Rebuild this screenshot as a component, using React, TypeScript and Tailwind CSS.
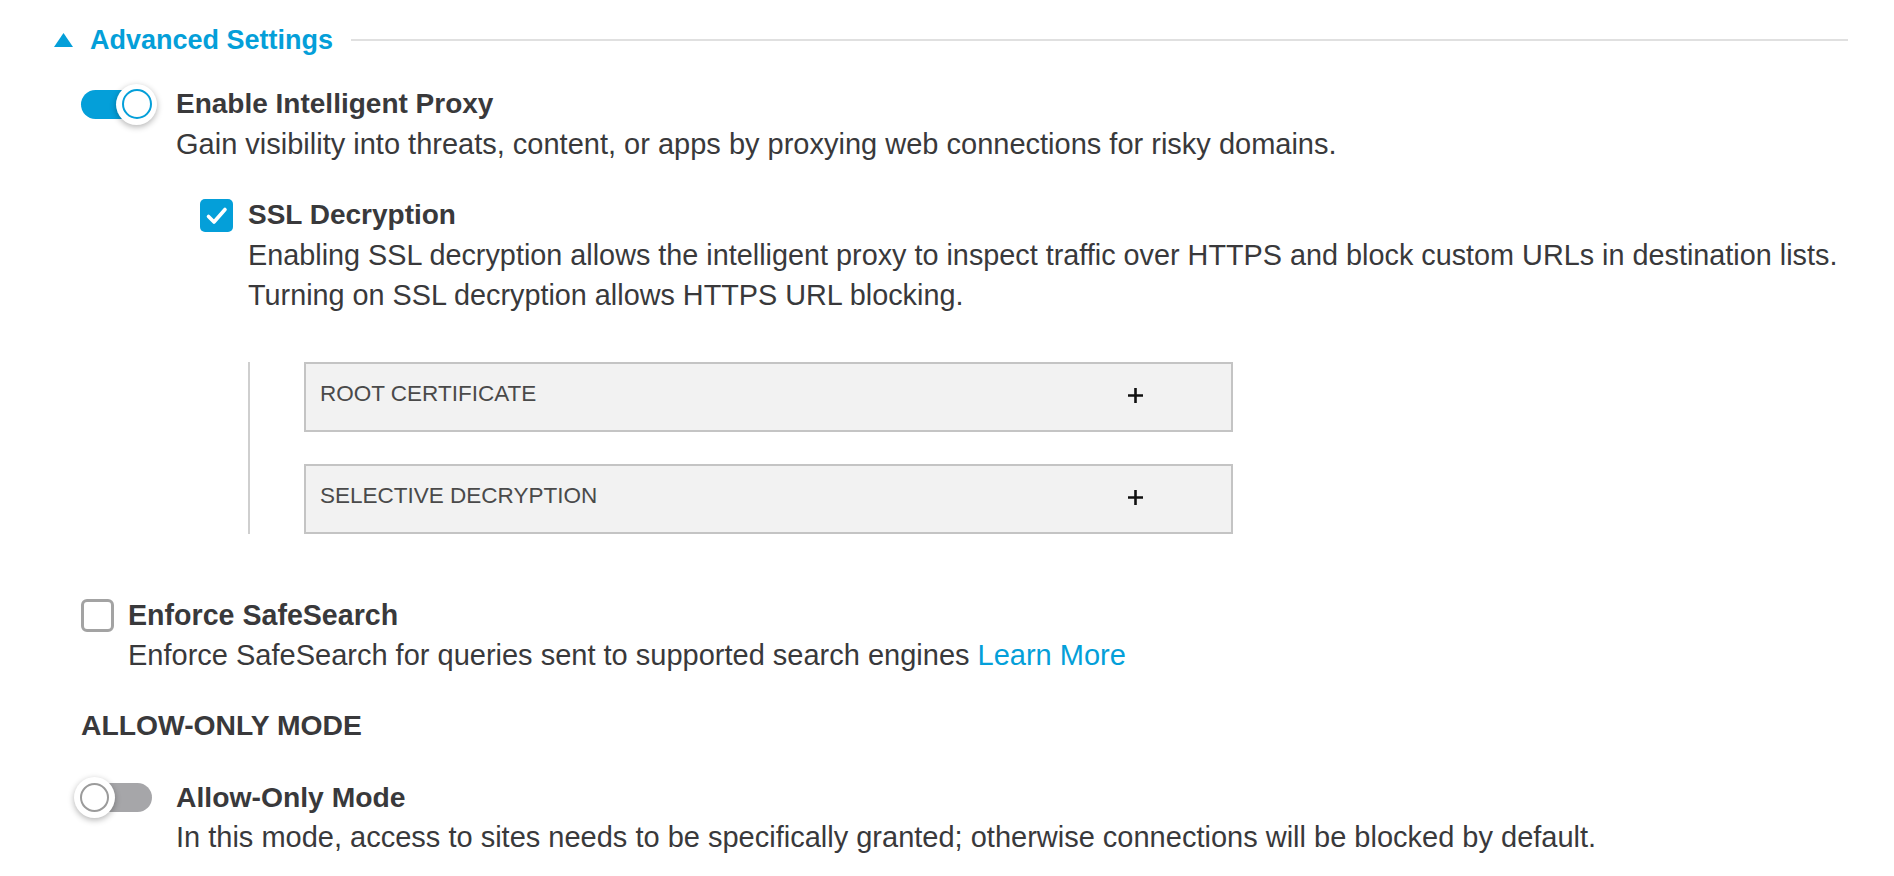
import React from "react";

type ToggleProps = { on: boolean };

function Toggle({ on }: ToggleProps) {
  return (
    <div className="relative h-[41px] w-[71px]">
      <div
        className={
          on
            ? "absolute left-0 top-[6px] h-[29px] w-[71px] rounded-full bg-[#049fd9]"
            : "absolute left-0 top-[6px] h-[29px] w-[71px] rounded-full bg-[#a6a6a9]"
        }
      />
      <div
        className={
          on
            ? "absolute left-[35px] top-0 flex h-[41px] w-[41px] items-center justify-center rounded-full bg-white shadow-[0_2px_6px_rgba(0,0,0,0.3)]"
            : "absolute left-[-7px] top-0 flex h-[41px] w-[41px] items-center justify-center rounded-full bg-white shadow-[0_2px_6px_rgba(0,0,0,0.3)]"
        }
      >
        <div
          className={
            on
              ? "h-[30px] w-[30px] rounded-full border-2 border-[#049fd9]"
              : "h-[29px] w-[29px] rounded-full border-2 border-[#9b9b9b]"
          }
        />
      </div>
    </div>
  );
}

function CheckedBox() {
  return (
    <svg width="33" height="33" viewBox="0 0 33 33">
      <rect x="0" y="0" width="33" height="33" rx="5" fill="#049fd9" />
      <path d="M8.5 17.5 L14 23 L25 10.5" fill="none" stroke="#fff" strokeWidth="3.6" strokeLinecap="round" strokeLinejoin="round" />
    </svg>
  );
}

function EmptyBox() {
  return <div className="h-[33px] w-[33px] rounded-[6px] border-[3px] border-[#a3a3a3] bg-white" />;
}

function Panel({ label }: { label: string }) {
  return (
    <div className="flex h-[70px] w-[929px] items-start justify-between border-2 border-[#c4c4c4] bg-[#f2f2f2] pl-[14px] pr-[88px] pt-[16px]">
      <span className="text-[22.5px] leading-[28px] text-[#4a4a4a]">{label}</span>
      <svg width="15" height="15" viewBox="0 0 15 15" className="mt-[8px]">
        <path d="M7.5 0 V15 M0 7.5 H15" stroke="#111" strokeWidth="2.6" />
      </svg>
    </div>
  );
}

export default function App() {
  return (
    <div className="min-h-[876px] w-full bg-white pt-[20px] font-['Liberation_Sans',Arial,sans-serif] text-[29px] leading-[40px] text-[#39393b]">
      <div className="flex h-[40px] items-center pl-[54px] pr-[46px]">
        <svg width="19" height="14" viewBox="0 0 19 14">
          <path d="M9.5 0 L19 14 L0 14 Z" fill="#049fd9" />
        </svg>
        <span className="ml-[17px] text-[27px] font-bold text-[#049fd9]">Advanced Settings</span>
        <div className="ml-[18px] h-[2px] flex-1 bg-[#e0e0e0]" />
      </div>

      <div className="pl-[81px]">
        <div className="mt-[24px] flex items-start">
          <div className="flex h-[40px] w-[95px] items-center">
            <Toggle on />
          </div>
          <div className="flex flex-col">
            <p className="text-[28px] font-bold">Enable Intelligent Proxy</p>
            <p>Gain visibility into threats, content, or apps by proxying web connections for risky domains.</p>

            <div className="ml-[24px] mt-[31px] flex items-start">
              <div className="flex h-[40px] w-[48px] items-center">
                <CheckedBox />
              </div>
              <div className="flex flex-col">
                <p className="text-[28px] font-bold">SSL Decryption</p>
                <p className="text-[28.8px]">Enabling SSL decryption allows the intelligent proxy to inspect traffic over HTTPS and block custom URLs in destination lists.</p>
                <p className="text-[28.8px]">Turning on SSL decryption allows HTTPS URL blocking.</p>
              </div>
            </div>

            <div className="ml-[72px] mt-[47px] flex flex-col gap-[32px] border-l-2 border-[#cfcfcf] pl-[54px]">
              <Panel label="ROOT CERTIFICATE" />
              <Panel label="SELECTIVE DECRYPTION" />
            </div>
          </div>
        </div>

        <div className="mt-[61px] flex items-start">
          <div className="flex h-[40px] w-[47px] items-center">
            <EmptyBox />
          </div>
          <div className="flex flex-col">
            <p className="text-[28.6px] font-bold">Enforce SafeSearch</p>
            <p>
              Enforce SafeSearch for queries sent to supported search engines{" "}
              <a className="text-[#049fd9]">Learn More</a>
            </p>
          </div>
        </div>

        <p className="mt-[30px] text-[28.3px] font-bold">ALLOW-ONLY MODE</p>

        <div className="mt-[32px] flex items-start">
          <div className="flex h-[40px] w-[95px] items-center">
            <Toggle on={false} />
          </div>
          <div className="flex flex-col">
            <p className="text-[28.3px] font-bold">Allow-Only Mode</p>
            <p>In this mode, access to sites needs to be specifically granted; otherwise connections will be blocked by default.</p>
          </div>
        </div>
      </div>
    </div>
  );
}
